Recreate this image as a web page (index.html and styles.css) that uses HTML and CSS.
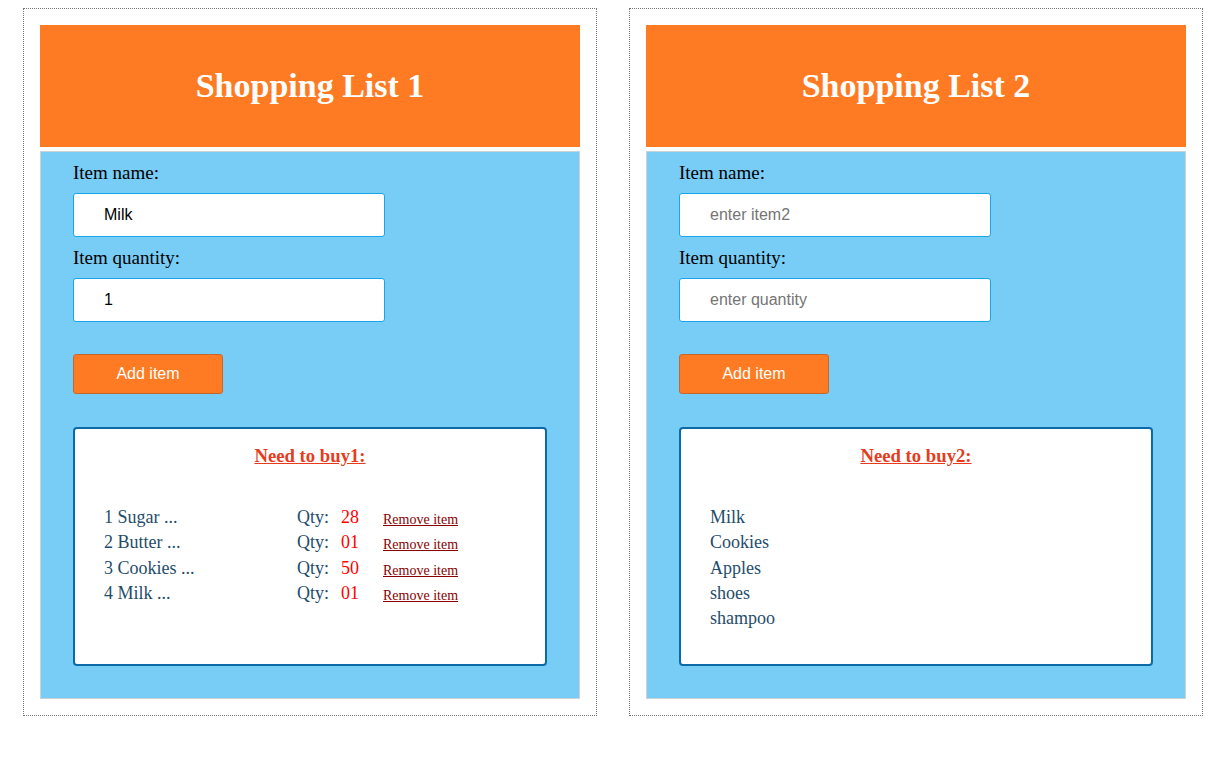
FILE: index.html
```html
<!DOCTYPE html>
<html>
<head>
<meta charset="utf-8">
<title>Shopping Lists</title>
<link rel="stylesheet" href="styles.css">
</head>
<body>
<div class="page">
  <section class="list-app">
    <header class="app-header"><h1>Shopping List 1</h1></header>
    <div class="panel">
      <label class="field-label">Item name:</label>
      <input class="field-input" type="text" value="Milk" placeholder="enter item1">
      <label class="field-label">Item quantity:</label>
      <input class="field-input" type="text" value="1" placeholder="enter quantity">
      <button class="add-btn">Add item</button>
      <div class="list-box">
        <h2 class="list-title">Need to buy1:</h2>
        <ul class="items">
          <li class="item-row"><span class="name">1 Sugar ...</span><span class="qty-label">Qty:</span><span class="qty">28</span><a class="remove" href="#">Remove item</a></li>
          <li class="item-row"><span class="name">2 Butter ...</span><span class="qty-label">Qty:</span><span class="qty">01</span><a class="remove" href="#">Remove item</a></li>
          <li class="item-row"><span class="name">3 Cookies ...</span><span class="qty-label">Qty:</span><span class="qty">50</span><a class="remove" href="#">Remove item</a></li>
          <li class="item-row"><span class="name">4 Milk ...</span><span class="qty-label">Qty:</span><span class="qty">01</span><a class="remove" href="#">Remove item</a></li>
        </ul>
      </div>
    </div>
  </section>
  <section class="list-app">
    <header class="app-header"><h1>Shopping List 2</h1></header>
    <div class="panel">
      <label class="field-label">Item name:</label>
      <input class="field-input" type="text" placeholder="enter item2">
      <label class="field-label">Item quantity:</label>
      <input class="field-input" type="text" placeholder="enter quantity">
      <button class="add-btn">Add item</button>
      <div class="list-box">
        <h2 class="list-title">Need to buy2:</h2>
        <ul class="items">
          <li class="item-simple">Milk</li>
          <li class="item-simple">Cookies</li>
          <li class="item-simple">Apples</li>
          <li class="item-simple">shoes</li>
          <li class="item-simple">shampoo</li>
        </ul>
      </div>
    </div>
  </section>
</div>
</body>
</html>
```
FILE: styles.css
```css
* { box-sizing: border-box; }
html, body { margin: 0; padding: 0; background: #fff; }
body { font-family: "Liberation Serif", "Times New Roman", serif; color: #000; }

.page {
  display: flex;
  gap: 32px;
  padding: 8px 0 0 23px;
}

.list-app {
  width: 574px;
  border: 1px dotted #777;
  padding: 16px;
  display: flex;
  flex-direction: column;
  gap: 4px;
}

.app-header {
  background: #ff7b23;
  height: 122px;
  display: flex;
  align-items: center;
  justify-content: center;
}
.app-header h1 {
  margin: 0;
  color: #fff;
  font-size: 34px;
  font-weight: bold;
  line-height: 1;
  padding-top: 0;
}

.panel {
  background: #78cdf6;
  border: 1px solid #c9d3d8;
  padding: 10px 32px 32px;
  display: flex;
  flex-direction: column;
  align-items: flex-start;
}

.field-label {
  display: block;
  font-size: 19px;
  line-height: 21px;
  margin-bottom: 10px;
}

.field-input {
  width: 312px;
  height: 44px;
  border: 1px solid #18a6e6;
  border-radius: 3px;
  background: #fff;
  padding: 0 0 0 30px;
  font-family: "Liberation Sans", Arial, sans-serif;
  font-size: 16px;
  color: #000;
  margin: 0 0 10px;
  outline: none;
}
.field-input::placeholder { color: #757575; }

.add-btn {
  margin-top: 22px;
  width: 150px;
  height: 40px;
  background: #ff7b23;
  border: 1px solid #c4682c;
  border-radius: 3px;
  color: #fff;
  font-family: "Liberation Sans", Arial, sans-serif;
  font-size: 16px;
  padding: 0;
}

.list-box {
  margin-top: 33px;
  width: 474px;
  height: 239px;
  background: #fff;
  border: 2px solid #0c6aa6;
  border-radius: 4px;
  padding: 16px 0 0 29px;
}

.list-title {
  margin: 0 0 0 -29px;
  text-align: center;
  font-size: 18.72px;
  line-height: 22px;
  font-weight: bold;
  color: #e63c1e;
  text-decoration: underline;
}

.items {
  list-style: none;
  margin: 38px 0 0;
  padding: 0;
  color: #1f4d6b;
  font-size: 18px;
}

.item-row, .item-simple {
  line-height: 25.3px;
  height: 25.3px;
}

.item-row {
  display: grid;
  grid-template-columns: 193px 44px 42px auto;
  align-items: baseline;
}

.qty { color: #ff0000; }

.remove {
  font-size: 14px;
  color: #8b0000;
  text-decoration: underline;
  position: relative;
  top: 1px;
}
```
